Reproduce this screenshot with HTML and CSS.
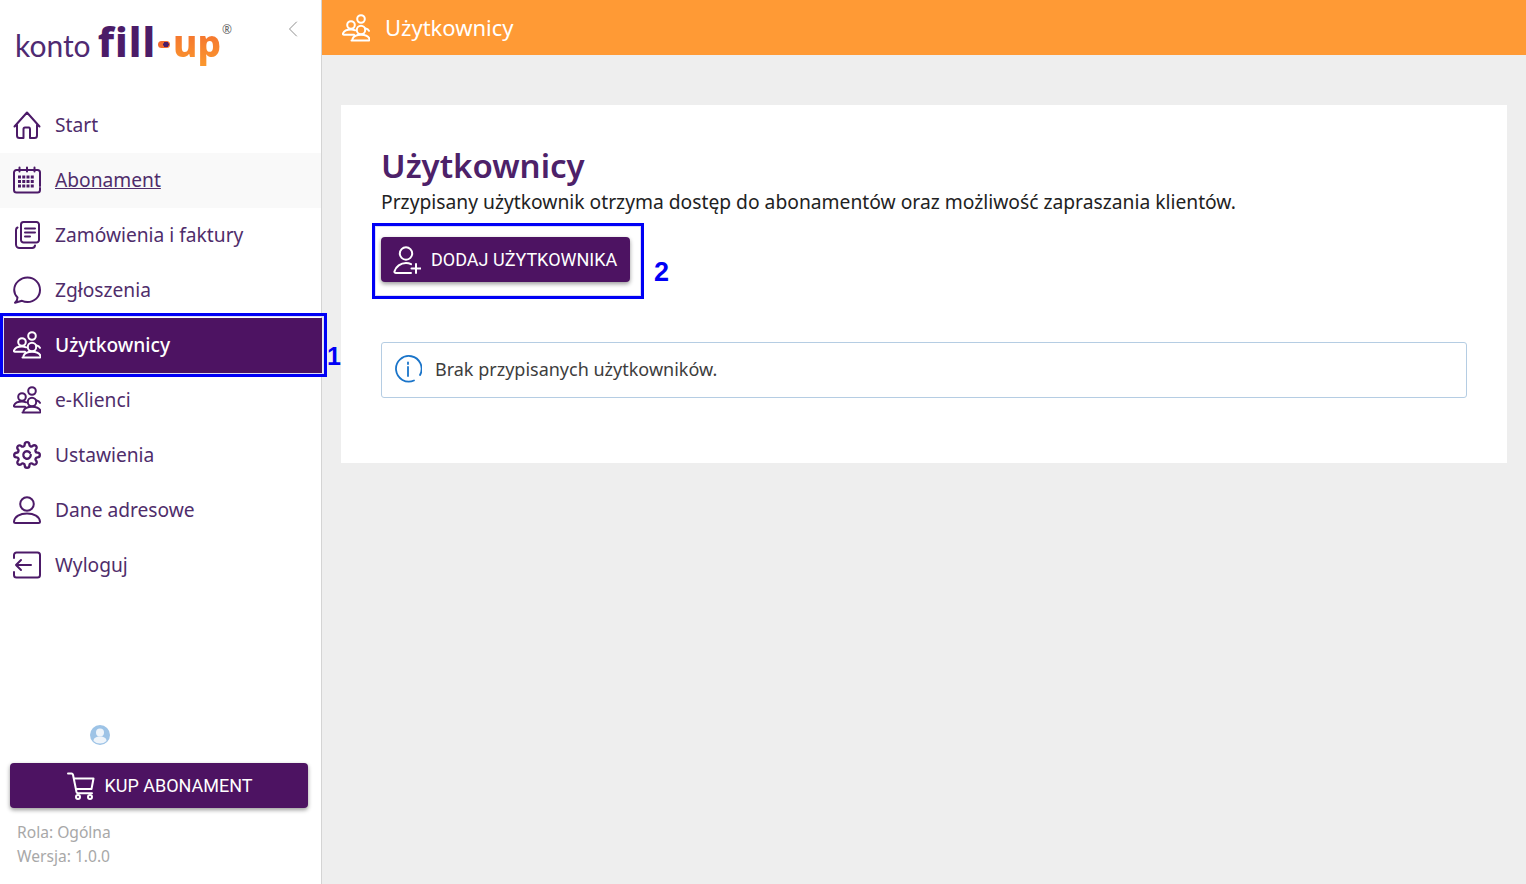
FILE: index.html
```html
<!DOCTYPE html>
<html lang="pl">
<head>
    <meta charset="UTF-8">
    <meta name="viewport" content="width=device-width, initial-scale=1.0">
    <title>Użytkownicy</title>
    <link rel="stylesheet" href="styles.css">
</head>
<body>
    <svg class="sprites" width="0" height="0">
        <symbol id="i-home" viewBox="0 0 28 28"><path d="M1.500 15.500 14 1.500l12.500 14M1.500 15.500l2.500-1.500v10.500a2.500 2.500 0 0 0 2.500 2.500h4V18a1.500 1.500 0 0 1 1.500-1.500h4A1.500 1.500 0 0 1 17 18v9h4.500a2.500 2.500 0 0 0 2.500-2.500V14l2.500 1.500"/></symbol>
        <symbol id="i-calendar" viewBox="0 0 28 28"><path d="M27 22v2a2.500 2.500 0 0 1-2.500 2.500h-21A2.500 2.500 0 0 1 1 24V6.500A2.500 2.500 0 0 1 3.500 4h21A2.500 2.500 0 0 1 27 6.500V20"/><path d="M6.500 1.500v4M14 1.500v4M21.500 1.500v4"/><path class="dots" d="M5 11h17M5 15.500h17M5 20h17"/></symbol>
        <symbol id="i-orders" viewBox="0 0 28 28"><path d="M8 3.500A2.500 2.500 0 0 1 10.500 1h13A2.500 2.500 0 0 1 26 3.500V19a2.500 2.500 0 0 1-2.500 2.500h-13A2.500 2.500 0 0 1 8 19z"/><path d="M4.500 6.500C3.500 7 3 8 3 9v14.500A3.500 3.500 0 0 0 6.500 27H19a3 3 0 0 0 3-2.500M12 7.500h10M12 11.500h10M12 15.500h5"/></symbol>
        <symbol id="i-chat" viewBox="0 0 28 28"><path d="M4.500 21.500C2.500 19.500 1.200 17 1.200 14 1.200 7 7.500 1.500 14.500 1.500S27 7 27 14s-5.700 12-12.500 12c-2 0-4-.5-5.500-1.200L2 26.800c1.500-1.300 2.500-3.300 2.500-5.300z"/></symbol>
        <symbol id="i-users" viewBox="0 0 28 28"><circle cx="19" cy="5" r="3.800"/><circle cx="9" cy="11" r="3.800"/><circle cx="19" cy="16" r="4.200"/><path d="M9.500 26.500h17c1 0 1.200-.8 1-1.500-.8-2.500-4-4.300-8.500-4.300s-7.700 1.800-8.500 4.300c-.2.700 0 1.500 1 1.500zM12 20.800H2c-1 0-1.300-.8-1-1.500 1-2.200 4-3.800 8-3.800 1.500 0 3 .3 4.200.8M23 14.300c2 .5 3.500 1.300 4 2.500"/></symbol>
        <symbol id="i-gear" viewBox="0 0 24 24"><path d="M14.500 10a3.200 3.200 0 1 0 .7 2"/><path d="M19.400 15a1.650 1.650 0 0 0 .33 1.820l.06.06a2 2 0 0 1 0 2.830 2 2 0 0 1-2.830 0l-.06-.06a1.650 1.650 0 0 0-1.820-.33 1.650 1.650 0 0 0-1 1.510V21a2 2 0 0 1-2 2 2 2 0 0 1-2-2v-.09A1.650 1.650 0 0 0 9 19.400a1.650 1.650 0 0 0-1.820.33l-.06.06a2 2 0 0 1-2.830 0 2 2 0 0 1 0-2.830l.06-.06a1.650 1.650 0 0 0 .33-1.820 1.650 1.650 0 0 0-1.510-1H3a2 2 0 0 1-2-2 2 2 0 0 1 2-2h.09A1.650 1.650 0 0 0 4.600 9a1.650 1.650 0 0 0-.33-1.820l-.06-.06a2 2 0 0 1 0-2.830 2 2 0 0 1 2.830 0l.06.06a1.650 1.650 0 0 0 1.820.33H9a1.650 1.650 0 0 0 1-1.510V3a2 2 0 0 1 2-2 2 2 0 0 1 2 2v.09a1.650 1.650 0 0 0 1 1.510 1.650 1.650 0 0 0 1.820-.33l.06-.06a2 2 0 0 1 2.830 0 2 2 0 0 1 0 2.830l-.06.06a1.650 1.650 0 0 0-.33 1.820V9a1.650 1.650 0 0 0 1.510 1H21a2 2 0 0 1 2 2 2 2 0 0 1-2 2h-.09a1.650 1.650 0 0 0-1.510 1z"/></symbol>
        <symbol id="i-person" viewBox="0 0 28 28"><circle cx="14" cy="8" r="6.800"/><path d="M1 25.500C1.500 20.500 7 17.500 14 17.500s12.500 3 13 8c0 1-.5 1.500-1.500 1.500h-23C1.500 27 1 26.500 1 25.500z"/></symbol>
        <symbol id="i-logout" viewBox="0 0 28 28"><path d="M1 7V4a2.500 2.500 0 0 1 2.500-2.500h21A2.500 2.500 0 0 1 27 4v20a2.500 2.500 0 0 1-2.500 2.500h-21A2.500 2.500 0 0 1 1 24v-3M18 14H3M8 9l-5 5 5 5"/></symbol>
        <symbol id="i-cart" viewBox="0 0 28 28"><path d="M1 1.500h3.500c.8 0 1.300.5 1.500 1.200L9.500 20c.2.800.8 1.200 1.500 1.200h14"/><path d="M7 6.500h19.500l-2 10.500H9"/><circle cx="11" cy="25" r="2"/><circle cx="23" cy="25" r="2"/></symbol>
        <symbol id="i-person-plus" viewBox="0 0 28 28"><circle cx="13" cy="7.500" r="6.200"/><path d="M18 27H3c-1.200 0-1.800-.8-1.500-1.800C3 20.500 7.500 17 13 17c2 0 3.500.4 5 1.200M23 18v9M18.500 22.500h9"/></symbol>
    </svg>

    <div class="layout">
        <aside class="sidebar">
            <div class="brand">
                <div class="logo">
                    <span class="logo-konto">konto</span>
                    <span class="logo-fill">fill</span>
                    <span class="logo-dash"></span>
                    <span class="logo-up">up</span>
                    <span class="logo-reg">®</span>
                </div>
                <span class="collapse">
                    <svg width="10" height="16" viewBox="0 0 10 16"><path d="M8.500 1 1.500 8l7 7"/></svg>
                </span>
            </div>

            <nav class="menu">
                <a class="menu-item"><svg class="icon"><use href="#i-home"/></svg>Start</a>
                <a class="menu-item hover"><svg class="icon"><use href="#i-calendar"/></svg>Abonament</a>
                <a class="menu-item"><svg class="icon"><use href="#i-orders"/></svg>Zamówienia i faktury</a>
                <a class="menu-item"><svg class="icon"><use href="#i-chat"/></svg>Zgłoszenia</a>
                <a class="menu-item active"><svg class="icon"><use href="#i-users"/></svg>Użytkownicy<span class="mark mark-menu"></span><span class="mark-num num-1">1</span></a>
                <a class="menu-item"><svg class="icon"><use href="#i-users"/></svg>e-Klienci</a>
                <a class="menu-item"><svg class="icon"><use href="#i-gear"/></svg>Ustawienia</a>
                <a class="menu-item"><svg class="icon"><use href="#i-person"/></svg>Dane adresowe</a>
                <a class="menu-item"><svg class="icon"><use href="#i-logout"/></svg>Wyloguj</a>
            </nav>

            <div class="side-foot">
                <div class="avatar">
                    <svg width="20" height="20" viewBox="0 0 20 20"><circle class="avatar-bg" cx="10" cy="10" r="10"/><circle class="avatar-fg" cx="10" cy="7.500" r="4"/><path class="avatar-fg" d="M3.500 16c0-3 2.500-4.500 6.500-4.500s6.500 1.500 6.500 4.500a9.500 9.500 0 0 1-13 0z"/></svg>
                </div>
                <button class="btn btn-wide"><svg class="btn-icon"><use href="#i-cart"/></svg>KUP ABONAMENT</button>
                <div class="meta">
                    <div>Rola: Ogólna</div>
                    <div>Wersja: 1.0.0</div>
                </div>
            </div>
        </aside>

        <div class="content">
            <header class="topbar">
                <svg class="icon"><use href="#i-users"/></svg>
                <span class="topbar-title">Użytkownicy</span>
            </header>
            <main class="main">
                <section class="card">
                    <h1>Użytkownicy</h1>
                    <p class="lead">Przypisany użytkownik otrzyma dostęp do abonamentów oraz możliwość zapraszania klientów.</p>
                    <div class="action">
                        <button class="btn btn-add"><svg class="btn-icon"><use href="#i-person-plus"/></svg>DODAJ UŻYTKOWNIKA</button>
                        <span class="mark mark-action"></span>
                        <span class="mark-num num-2">2</span>
                    </div>
                    <div class="notice">
                        <svg class="notice-icon" viewBox="0 0 28 28"><path d="M20 25.500A12.800 12.800 0 1 1 26 20"/><path d="M14 12v9"/><path d="M14 7.500v1.500"/></svg>
                        Brak przypisanych użytkowników.
                    </div>
                </section>
            </main>
        </div>
    </div>
</body>
</html>
```

FILE: styles.css
```css
* {
    box-sizing: border-box;
}
html, body {
    height: 100%;
}
body {
    margin: 0;
    overflow: hidden;
    font-family: 'Noto Sans', 'Open Sans', sans-serif;
    color: #222;
}
.sprites {
    position: absolute;
}
svg {
    fill: none;
    stroke: currentColor;
    stroke-width: 2;
    stroke-linecap: round;
    stroke-linejoin: round;
}
.dots {
    stroke-width: 3;
    stroke-linecap: butt;
    stroke-dasharray: 3 1.250;
}
.layout {
    display: flex;
    height: 100%;
}

/* sidebar */
.sidebar {
    width: 322px;
    flex-shrink: 0;
    display: flex;
    flex-direction: column;
    background-color: #fff;
    border-right: 1px solid #d4d4d4;
}
.brand {
    height: 98px;
    display: flex;
    justify-content: space-between;
    padding: 20px 23px 0 15px;
}
.logo {
    display: flex;
    align-items: baseline;
    height: 50px;
    margin-top: -4px;
}
.logo-konto {
    font-family: 'Lato', sans-serif;
    font-weight: 400;
    font-size: 30px;
    line-height: 50px;
    color: #4f2a72;
    margin-right: 7px;
}
.logo-fill {
    font-family: 'Noto Sans', sans-serif;
    font-weight: 800;
    font-size: 41px;
    line-height: 50px;
    color: #4c1c68;
    letter-spacing: 1px;
}
.logo-dash {
    width: 12px;
    height: 7px;
    margin: 0 3px 0 2px;
    position: relative;
    top: -9px;
    border-radius: 4px;
    background: radial-gradient(circle at 8px 3.500px, #4c1c68 2.500px, #f26a2e 3px);
}
.logo-up {
    font-family: 'Noto Sans', sans-serif;
    font-weight: 800;
    font-size: 37px;
    line-height: 50px;
    background: linear-gradient(#f2652f, #fb9a2e);
    -webkit-background-clip: text;
    background-clip: text;
    color: transparent;
}
.logo-reg {
    align-self: flex-start;
    font-size: 12px;
    line-height: 12px;
    margin: 8px 0 0 1px;
    color: #666;
}
.collapse {
    color: #8f8f8f;
}
.collapse svg {
    stroke-width: 1;
}
.menu {
    display: flex;
    flex-direction: column;
}
.menu-item {
    position: relative;
    height: 55px;
    display: flex;
    align-items: center;
    gap: 14px;
    padding: 0 0 2px 13px;
    font-size: 19.200px;
    color: #4f2d6b;
}
.icon {
    width: 28px;
    height: 28px;
    flex-shrink: 0;
    color: #4c1a68;
}
.menu-item.hover {
    background-color: #f9f9f9;
    text-decoration: underline;
}
.menu-item.active {
    margin-right: -1px;
    background-color: #4d1362;
    color: #fff;
    font-weight: 500;
}
.menu-item.active .icon {
    color: #fff;
}

/* blue annotations drawn over the screenshot */
.mark {
    position: absolute;
    border: 3px solid #0000f5;
    box-shadow: inset 0 0 0 1px #dcdcf5;
}
.mark-menu {
    left: 0;
    top: -5px;
    width: 327px;
    height: 64px;
    z-index: 2;
}
.mark-action {
    left: -9px;
    top: -14px;
    width: 272px;
    height: 76px;
}
.mark-num {
    position: absolute;
    font-family: 'Liberation Sans', Arial, sans-serif;
    font-weight: 700;
    font-size: 27px;
    line-height: 30px;
    color: #0000f5;
    z-index: 2;
}
.num-1 {
    left: 327px;
    top: 23px;
    font-size: 25px;
}
.num-2 {
    left: 273px;
    top: 20px;
}
.side-foot {
    margin-top: auto;
    padding-bottom: 16px;
}
.avatar {
    display: flex;
    justify-content: center;
    padding-right: 122px;
    margin-bottom: 18px;
    height: 20px;
}
.avatar svg {
    stroke: none;
}
.avatar-bg {
    fill: #9dc3e6;
}
.avatar-fg {
    fill: #eef4fa;
}
.btn {
    display: flex;
    align-items: center;
    border: none;
    border-radius: 4px;
    background-color: #4d1362;
    color: #fff;
    font-family: 'Roboto', sans-serif;
    font-size: 18px;
    box-shadow: 0 2px 4px rgba(0,0,0,0.4);
}
.btn-wide {
    justify-content: center;
    gap: 9px;
    width: 298px;
    height: 45px;
    margin: 0 0 0 10px;
    padding-left: 8px;
}
.btn-icon {
    width: 28px;
    height: 28px;
}
.meta {
    margin: 12px 0 0 17px;
    font-size: 15.600px;
    line-height: 24px;
    color: #a8a8a8;
}

/* content */
.content {
    flex: 1;
    min-width: 0;
    display: flex;
    flex-direction: column;
    background-color: #eeeeee;
}
.topbar {
    height: 55px;
    display: flex;
    align-items: center;
    gap: 15px;
    padding-left: 20px;
    background-color: #ff9a35;
    color: #fff;
    font-size: 22px;
}
.topbar-title {
    padding-bottom: 2px;
}
.topbar .icon {
    color: #fff;
}
.main {
    padding: 50px 19px 0;
}
.card {
    height: 358px;
    padding: 40px;
    background-color: #fff;
}
h1 {
    margin: -1px 0 1px;
    font-size: 33px;
    font-weight: 600;
    line-height: 44px;
    color: #4d2169;
}
.lead {
    margin: 0;
    font-size: 19.250px;
    line-height: 26px;
    color: #222;
}
.action {
    position: relative;
    margin-top: 22px;
    width: 249px;
}
.btn-add {
    gap: 10px;
    width: 249px;
    height: 45px;
    padding-left: 12px;
}
.notice {
    display: flex;
    align-items: center;
    gap: 13px;
    height: 56px;
    margin-top: 60px;
    padding: 0 0 2px 12px;
    border: 1px solid #b5cde3;
    border-radius: 3px;
    font-size: 18px;
    color: #3d3d3d;
}
.notice-icon {
    width: 28px;
    height: 28px;
    color: #1a74c9;
    stroke-width: 1.800;
}
```
